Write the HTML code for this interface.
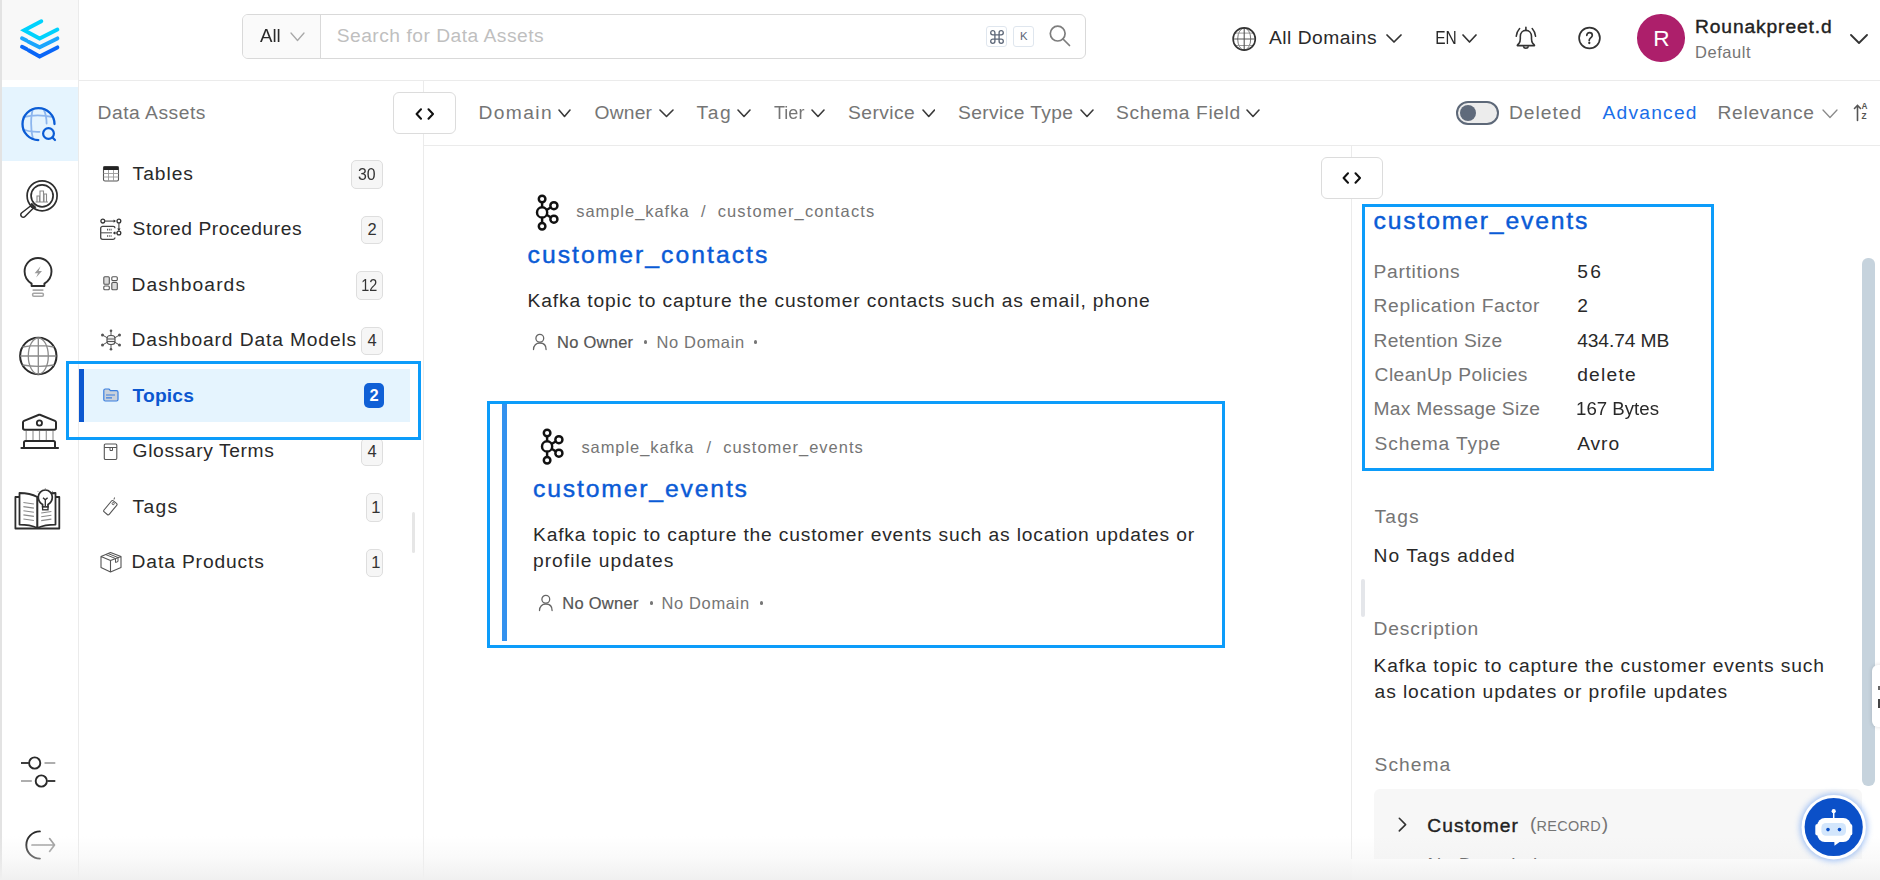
<!DOCTYPE html><html><head><meta charset="utf-8"><style>
html,body{margin:0;padding:0;}
body{width:1880px;height:880px;overflow:hidden;position:relative;background:#fff;font-family:"Liberation Sans",sans-serif;}
.t{position:absolute;white-space:nowrap;line-height:1;}
</style></head><body>

<div style="position:absolute;left:0px;top:0px;width:78px;height:880px;background:#fff;"></div>
<div style="position:absolute;left:0px;top:0px;width:1.5px;height:880px;background:#e3e3e3;"></div>
<div style="position:absolute;left:1.5px;top:0px;width:76.5px;height:80px;background:#f8f8f8;"></div>
<div style="position:absolute;left:1.5px;top:86.5px;width:76.5px;height:74px;background:#e5f4fe;"></div>
<div style="position:absolute;left:78px;top:0px;width:1px;height:880px;background:#ebebeb;"></div>
<div style="position:absolute;left:79px;top:80px;width:1801px;height:1px;background:#ebebeb;"></div>
<div style="position:absolute;left:423px;top:81px;width:1px;height:799px;background:#ebebeb;"></div>
<div style="position:absolute;left:424px;top:145px;width:1456px;height:1px;background:#ebebeb;"></div>
<div style="position:absolute;left:1351px;top:146px;width:1px;height:713px;background:#ebebeb;"></div>
<svg style="position:absolute;left:16px;top:15px;display:none" width="48" height="48" viewBox="0 0 48 48" fill="none">
<path d="M21 5 L6.5 12.8 L21 20.5 L35.5 12.8" stroke="#00cfff" stroke-width="3.2" fill="none" stroke-linejoin="miter"/>
</svg>
<svg style="position:absolute;left:0px;top:0px" width="78" height="78" viewBox="0 0 78 78">
<path d="M41.3 21.2 L24.2 30.2 L39.6 38.5 L57.4 29.6" stroke="#00d2fd" stroke-width="3.9" fill="none" stroke-linecap="round" stroke-miterlimit="4"/>
<path d="M22 38.3 L26.5 40.6 M28.5 41.8 L39.6 47.3 L57.4 38.4" stroke="#1ba6fd" stroke-width="3.9" fill="none" stroke-linecap="round"/>
<path d="M22 46.8 L26.5 49.1 M28.5 50.3 L39.6 56.5 L57.4 47.4" stroke="#0a66f7" stroke-width="3.9" fill="none" stroke-linecap="round"/>
</svg>
<div style="position:absolute;left:242px;top:14px;width:844px;height:44.5px;box-sizing:border-box;border:1px solid #d9d9d9;border-radius:6px;background:#fff;"></div>
<div style="position:absolute;left:243px;top:15px;width:77px;height:42.5px;background:#fafafa;border-radius:5px 0 0 5px;"></div>
<div style="position:absolute;left:320px;top:15px;width:1px;height:42.5px;background:#d9d9d9;"></div>
<svg style="position:absolute;left:290px;top:32px;" width="15" height="9.5" viewBox="0 0 15 9.5" fill="none"><path d="M1 1 L7.5 8.5 L14 1" stroke="#a8a8a8" stroke-width="1.3" stroke-linecap="round" stroke-linejoin="round"/></svg>
<div style="position:absolute;left:986px;top:26px;width:21px;height:21px;box-sizing:border-box;border:1px solid #dfe6ee;border-radius:3px;background:#fff;"></div>
<div style="position:absolute;left:1013px;top:26px;width:21px;height:21px;box-sizing:border-box;border:1px solid #dfe6ee;border-radius:3px;background:#fff;"></div>
<svg style="position:absolute;left:989.6px;top:29.6px" width="14" height="14" viewBox="2 2 20 20"><path d="M18 3a3 3 0 0 0-3 3v12a3 3 0 0 0 3 3 3 3 0 0 0 3-3 3 3 0 0 0-3-3H6a3 3 0 0 0-3 3 3 3 0 0 0 3 3 3 3 0 0 0 3-3V6a3 3 0 0 0-3-3 3 3 0 0 0-3 3 3 3 0 0 0 3 3h12a3 3 0 0 0 3-3 3 3 0 0 0-3-3z" stroke="#5d6778" stroke-width="1.9" fill="none"/></svg>
<svg style="position:absolute;left:1045px;top:22px;" width="30" height="30" viewBox="0 0 30 30" fill="none"><circle cx="12.7" cy="11.6" r="7.4" stroke="#7d7d7d" stroke-width="1.7"/><path d="M18 17 L24.5 23.5" stroke="#7d7d7d" stroke-width="1.7" stroke-linecap="round"/></svg>
<svg style="position:absolute;left:1230px;top:24.5px;" width="28" height="28" viewBox="0 0 28 28" fill="none"><ellipse cx="14.2" cy="14" rx="6.5" ry="11" stroke="#777" stroke-width="1"/>
<path d="M4.6 8.1 H23.8 M4.6 20.5 H23.8" stroke="#999" stroke-width="1"/>
<path d="M14.2 3 V25 M3 14 H25.4" stroke="#555" stroke-width="1.1"/>
<circle cx="14.2" cy="14" r="11.1" stroke="#333" stroke-width="1.6"/></svg>
<svg style="position:absolute;left:1386px;top:34px;" width="16" height="9" viewBox="0 0 16 9" fill="none"><path d="M1 1 L8.0 8 L15 1" stroke="#333" stroke-width="1.7" stroke-linecap="round" stroke-linejoin="round"/></svg>
<svg style="position:absolute;left:1462px;top:34px;" width="15" height="9" viewBox="0 0 15 9" fill="none"><path d="M1 1 L7.5 8 L14 1" stroke="#333" stroke-width="1.7" stroke-linecap="round" stroke-linejoin="round"/></svg>
<svg style="position:absolute;left:1512px;top:24px;" width="28" height="28" viewBox="0 0 28 28" fill="none"><path d="M13.9 3.4 V6.3" stroke="#333" stroke-width="1.6" stroke-linecap="round"/>
<path d="M5.3 21.6 C5.3 20.8 6.2 20.2 7 19.4 C8 18.3 8.3 16.8 8.3 14.8 V12.6 C8.3 8.9 10.8 6.4 13.9 6.4 C17 6.4 19.5 8.9 19.5 12.6 V14.8 C19.5 16.8 19.8 18.3 20.8 19.4 C21.6 20.2 22.5 20.8 22.5 21.6 Z" stroke="#333" stroke-width="1.6" stroke-linejoin="round"/>
<path d="M11.3 22.2 A2.7 2.7 0 0 0 16.5 22.2" stroke="#333" stroke-width="1.5" fill="none"/>
<path d="M7.6 4.6 C5.8 6.6 4.6 9.4 4.2 12.3 M20.2 4.6 C22 6.6 23.2 9.4 23.6 12.3" stroke="#333" stroke-width="1.5" stroke-linecap="round" fill="none"/></svg>
<svg style="position:absolute;left:1575px;top:24px;" width="28" height="28" viewBox="0 0 28 28" fill="none"><circle cx="14.5" cy="14" r="10.4" stroke="#333" stroke-width="1.7"/>
<path d="M11.8 11.3 C11.8 9.6 13 8.6 14.5 8.6 C16.1 8.6 17.3 9.7 17.3 11.2 C17.3 12.6 16.4 13.3 15.4 14.1 C14.6 14.8 14.2 15.4 14.2 16.6" stroke="#333" stroke-width="1.7" fill="none" stroke-linecap="round"/>
<circle cx="14.3" cy="19" r="1.15" fill="#333"/></svg>
<div style="position:absolute;left:1637px;top:14.2px;width:47.5px;height:47.5px;background:#ad1f6b;border-radius:50%;"></div>
<svg style="position:absolute;left:1850px;top:34px;" width="18" height="10" viewBox="0 0 18 10" fill="none"><path d="M1 1 L9.0 9 L17 1" stroke="#333" stroke-width="1.8" stroke-linecap="round" stroke-linejoin="round"/></svg>
<svg style="position:absolute;left:18px;top:103px;" width="42" height="42" viewBox="0 0 42 42" fill="none">
<path d="M15 6 C12.5 13 12.5 27 15 36 M25.5 6 C28 11 28.6 15.5 28.6 20.5 M5.5 14 C14 12 25 12 35 14 M5 26.5 C10 28.5 16 29 21.5 28.8" stroke="#8db6ee" stroke-width="1.8" fill="none" stroke-linecap="round"/>
<path d="M36.5 21 A16 16 0 1 0 20.3 37.1" stroke="#0b5cd5" stroke-width="2.3" stroke-linecap="round" fill="none"/>
<circle cx="30.5" cy="30.5" r="5.4" stroke="#0b5cd5" stroke-width="2.2" fill="none"/>
<path d="M34.5 34.5 L37 37" stroke="#0b5cd5" stroke-width="2.2" stroke-linecap="round"/>
</svg>
<svg style="position:absolute;left:18px;top:176px;" width="42" height="42" viewBox="0 0 42 42" fill="none">
<circle cx="24.1" cy="19.8" r="15" stroke="#2e2e2e" stroke-width="1.7"/>
<circle cx="24.1" cy="19.8" r="11" stroke="#2e2e2e" stroke-width="1.7"/>
<path d="M19 26 V20 H21.5 V26 M22 26 V15 H25.5 V26 M26 26 V18 H28.5 V26 M17.5 26 H30" stroke="#8a8a8a" stroke-width="1.1" fill="none"/>
<path d="M12.5 30 L15 32.5 L7 40.5 C6 41.5 4.5 41.5 3.5 40.5 C2.5 39.5 2.5 38 3.5 37 Z" stroke="#2e2e2e" stroke-width="1.5" fill="none" stroke-linejoin="round"/>
<path d="M13 27.5 L17.5 32" stroke="#2e2e2e" stroke-width="2.4"/>
</svg>
<svg style="position:absolute;left:18px;top:252px;" width="42" height="50" viewBox="0 0 42 50" fill="none">
<path d="M13.6 34 V31.6 C9.5 29 6.6 24.8 6.6 19.5 C6.6 12 12.5 6 20 6 C27.5 6 33.5 12 33.5 19.5 C33.5 24.8 30.5 29 26.4 31.6 V34 Z" stroke="#2e2e2e" stroke-width="1.9" stroke-linejoin="round"/>
<path d="M22.6 14.3 L16.6 21.2 H20 L18.2 25.4 L24 19 H20.6 Z" fill="#9a9a9a"/>
<path d="M14.6 38.1 H25.4" stroke="#a5a5a5" stroke-width="1.7"/>
<rect x="14.6" y="41.3" width="10.8" height="3" rx="1.2" stroke="#a5a5a5" stroke-width="1.5"/>
</svg>
<svg style="position:absolute;left:16px;top:334px;" width="44" height="44" viewBox="0 0 44 44" fill="none">
<circle cx="22.3" cy="22" r="18.2" stroke="#2a2a2a" stroke-width="2"/>
<ellipse cx="22.3" cy="22" rx="10" ry="18" stroke="#8a8a8a" stroke-width="1.3"/>
<path d="M22.3 4 V40 M4.2 22 H40.4 M6.5 13 C16 11.5 29 11.5 38 13 M6.5 31 C16 32.5 29 32.5 38 31" stroke="#8a8a8a" stroke-width="1.3" fill="none"/>
</svg>
<svg style="position:absolute;left:16px;top:408px;" width="46" height="46" viewBox="0 0 46 46" fill="none">
<path d="M7 14.5 C7 13.8 7.3 13.2 8 12.9 L23 6.8 C23.3 6.7 23.6 6.7 23.9 6.8 L39 12.9 C39.7 13.2 40 13.8 40 14.5 V20 C40 21 39.3 21.8 38.3 21.8 H8.7 C7.7 21.8 7 21 7 20 Z" stroke="#2a2a2a" stroke-width="2"/>
<circle cx="23.4" cy="15" r="2.6" stroke="#2a2a2a" stroke-width="1.8"/>
<path d="M10.2 23 V33 M17 23 V33 M23.5 23 V33 M30.3 23 V33 M37 23 V33" stroke="#9a9a9a" stroke-width="1.2"/>
<path d="M8 40 V34.6 C8 33.8 8.7 33 9.5 33 H37.5 C38.3 33 39 33.8 39 34.6 V40" stroke="#2a2a2a" stroke-width="2"/>
<path d="M5.5 40 H42" stroke="#2a2a2a" stroke-width="2.2" stroke-linecap="round"/>
</svg>
<svg style="position:absolute;left:14px;top:486px;" width="48" height="48" viewBox="0 0 48 48" fill="none">
<path d="M5.5 11 H1.4 V42.5 H45.3 V11 H41.5" stroke="#2e2e2e" stroke-width="1.8" fill="none" stroke-linejoin="round"/>
<path d="M23.4 11 C19 8.6 12 7 5.5 7 V38.6 C12 38.6 19 40 23.4 42 Z" stroke="#2e2e2e" stroke-width="1.8" fill="#fff" stroke-linejoin="round"/>
<path d="M23.4 11 C27.8 8.6 34.8 7 41.5 7 V38.6 C34.8 38.6 27.8 40 23.4 42 Z" stroke="#2e2e2e" stroke-width="1.8" fill="#fff" stroke-linejoin="round"/>
<path d="M9.4 16.5 L19.9 18 M9.4 20.6 L19.9 22.1 M9.4 24.8 L19.9 26.3 M9.4 28.9 L19.9 30.4 M9.4 33 L19.9 34.5 M27.2 27 L37.4 25.5 M27.2 30.7 L37.4 29.2 M27.2 34.6 L37.4 33.1" stroke="#8a8a8a" stroke-width="1.1"/>
<path d="M28.6 21 V18.4 C26.1 17 24.3 14.3 24.3 11 C24.3 7.1 27.4 4 31.3 4 C35.2 4 38.3 7.1 38.3 11 C38.3 14.3 36.5 17 34 18.4 V21 Z" stroke="#2e2e2e" stroke-width="1.7" fill="#fff" stroke-linejoin="round"/>
<path d="M31.3 20 V13.6 M29 11.7 L31.3 13.8 L33.6 11.7" stroke="#2e2e2e" stroke-width="1.3" fill="none"/>
<rect x="28.6" y="21" width="5.4" height="2.8" stroke="#2e2e2e" stroke-width="1.3" fill="#fff"/>
<circle cx="31.3" cy="2.6" r="0.6" fill="#999"/><circle cx="24" cy="5.4" r="0.6" fill="#999"/><circle cx="38.4" cy="5.4" r="0.6" fill="#999"/>
</svg>
<svg style="position:absolute;left:16px;top:752px;" width="44" height="40" viewBox="0 0 44 40" fill="none">
<path d="M5 11 H12.8" stroke="#2a2a2a" stroke-width="1.8"/>
<path d="M28.5 11 H39.3" stroke="#a0a0a0" stroke-width="1.7"/>
<path d="M5 29 H15.8" stroke="#a0a0a0" stroke-width="1.7"/>
<path d="M31.5 29 H39.3" stroke="#2a2a2a" stroke-width="1.8"/>
<circle cx="18.7" cy="11" r="5.6" stroke="#2a2a2a" stroke-width="1.9"/>
<circle cx="25.3" cy="29" r="5.6" stroke="#2a2a2a" stroke-width="1.9"/>
</svg>
<svg style="position:absolute;left:16px;top:826px;" width="44" height="40" viewBox="0 0 44 40" fill="none">
<path d="M23.9 5.4 A13.6 13.6 0 0 0 23.9 32.6" stroke="#2a2a2a" stroke-width="1.9" fill="none" stroke-linecap="round"/>
<path d="M16 19 H38.3 M33.6 12.6 L38.5 19 L33.6 25.4" stroke="#9a9a9a" stroke-width="1.7" fill="none" stroke-linecap="round" stroke-linejoin="round"/>
</svg>
<div style="position:absolute;left:393px;top:92px;width:63px;height:42px;box-sizing:border-box;border:1px solid #dcdcdc;border-radius:6px;background:#fff;"></div>
<svg style="position:absolute;left:414.5px;top:107.5px;" width="20" height="12" viewBox="0 0 20 12" fill="none"><path d="M6 1.2 L1.6 6 L6 10.8 M13.5 1.2 L18 6 L13.5 10.8" stroke="#111" stroke-width="2" fill="none" stroke-linecap="round" stroke-linejoin="round"/></svg>
<div style="position:absolute;left:79px;top:369px;width:331px;height:53px;background:#e5f4fe;"></div>
<div style="position:absolute;left:79px;top:369px;width:4.5px;height:53px;background:#0b57d0;"></div>
<div style="position:absolute;left:351.2px;top:160px;width:31.8px;height:28.5px;box-sizing:border-box;border:1px solid #dedede;border-radius:5px;background:#f6f6f6;"></div>
<div style="position:absolute;left:361.2px;top:215.5px;width:21.8px;height:28.5px;box-sizing:border-box;border:1px solid #dedede;border-radius:5px;background:#f6f6f6;"></div>
<div style="position:absolute;left:356.2px;top:271px;width:26.8px;height:28.5px;box-sizing:border-box;border:1px solid #dedede;border-radius:5px;background:#f6f6f6;"></div>
<div style="position:absolute;left:361.2px;top:326.5px;width:21.8px;height:28.5px;box-sizing:border-box;border:1px solid #dedede;border-radius:5px;background:#f6f6f6;"></div>
<div style="position:absolute;left:364px;top:382.6px;width:19.5px;height:25.4px;background:#1060d6;border-radius:5px;"></div>
<div style="position:absolute;left:361.2px;top:437.5px;width:21.8px;height:28.5px;box-sizing:border-box;border:1px solid #dedede;border-radius:5px;background:#f6f6f6;"></div>
<div style="position:absolute;left:365.5px;top:493px;width:17.5px;height:28.5px;box-sizing:border-box;border:1px solid #dedede;border-radius:5px;background:#f6f6f6;"></div>
<div style="position:absolute;left:365.5px;top:548.5px;width:17.5px;height:28.5px;box-sizing:border-box;border:1px solid #dedede;border-radius:5px;background:#f6f6f6;"></div>
<svg style="position:absolute;left:101px;top:164px;" width="20" height="20" viewBox="0 0 20 20" fill="none"><rect x="2.5" y="2.5" width="15" height="14.5" rx="1.5" stroke="#555" stroke-width="1.1"/><rect x="2.5" y="2.5" width="15" height="3.5" fill="#222"/>
<path d="M2.5 9.5 H17.5 M2.5 13 H17.5 M7.5 6 V17 M12.5 6 V17" stroke="#999" stroke-width="0.9"/></svg>
<svg style="position:absolute;left:99px;top:218px;" width="24" height="24" viewBox="0 0 24 24" fill="none"><circle cx="3.8" cy="3.1" r="1.9" stroke="#333" stroke-width="1.3"/><path d="M5.7 3.1 H16" stroke="#555" stroke-width="1.2"/><path d="M14.6 1.4 L17 3.1 L14.6 4.8 Z" fill="#333"/>
<circle cx="19.9" cy="3.1" r="1.9" stroke="#333" stroke-width="1.3"/><path d="M19.9 5 V12" stroke="#555" stroke-width="1.2"/><path d="M18.2 10.6 L19.9 13 L21.6 10.6 Z" fill="#333"/>
<circle cx="19.9" cy="15" r="1.9" stroke="#333" stroke-width="1.3"/><path d="M18 15 H15" stroke="#555" stroke-width="1.2"/><path d="M16.2 13.3 L13.8 15 L16.2 16.7 Z" fill="#333"/>
<path d="M16 10.2 C16 9.2 15.2 8.4 14.2 8.4 H3.6 C2.6 8.4 1.7 9.2 1.7 10.2 V19.5 C1.7 20.5 2.6 21.3 3.6 21.3 H14.2 C15.2 21.3 16 20.5 16 19.5" stroke="#444" stroke-width="1.3" fill="none"/>
<path d="M1.7 14.8 H13" stroke="#555" stroke-width="1.1"/><path d="M8 11.6 H13 M8 18 H13" stroke="#555" stroke-width="1.6" stroke-dasharray="1 0.8"/></svg>
<svg style="position:absolute;left:102px;top:275px;" width="18" height="18" viewBox="0 0 18 18" fill="none"><rect x="1.8" y="1.8" width="5.5" height="7.5" rx="1" stroke="#555" stroke-width="1.1" fill="#ddd"/><rect x="9.8" y="1.8" width="5.5" height="3.8" rx="1" stroke="#555" stroke-width="1.1"/>
<rect x="1.8" y="11" width="5.5" height="3.8" rx="1" stroke="#555" stroke-width="1.1"/><rect x="9.8" y="7.5" width="5.5" height="7.3" rx="1" stroke="#555" stroke-width="1.1" fill="#ddd"/></svg>
<svg style="position:absolute;left:99px;top:328px;" width="24" height="24" viewBox="0 0 24 24" fill="none"><path d="M12 2.5 V21.5 M3.5 7 L20.5 17 M3.5 17 L20.5 7" stroke="#555" stroke-width="1"/>
<circle cx="12" cy="2.8" r="1.3" fill="#555"/><circle cx="12" cy="21.2" r="1.3" fill="#555"/><circle cx="3.5" cy="7" r="1.5" fill="#555"/><circle cx="20.5" cy="7" r="1.5" fill="#555"/><circle cx="3.5" cy="17" r="1.5" fill="#555"/><circle cx="20.5" cy="17" r="1.5" fill="#555"/>
<rect x="8" y="7.5" width="8" height="9" rx="3" stroke="#555" stroke-width="1.2" fill="#eee"/><path d="M8 11 H16 M8 13.5 H16" stroke="#555" stroke-width="1"/></svg>
<svg style="position:absolute;left:102px;top:387px;" width="18" height="16" viewBox="0 0 18 16" fill="none"><path d="M1.8 3.5 C1.8 2.6 2.5 2 3.3 2 H7 L8.5 3.7 H14.5 C15.3 3.7 16 4.4 16 5.2 V12.5 C16 13.3 15.3 14 14.5 14 H3.3 C2.5 14 1.8 13.3 1.8 12.5 Z" stroke="#3b7fe0" stroke-width="1.2" fill="#c9d1db"/>
<path d="M4 8 H13 M4 10.8 H10" stroke="#3b7fe0" stroke-width="1.2"/></svg>
<svg style="position:absolute;left:102px;top:441.5px;" width="18" height="20" viewBox="0 0 18 20" fill="none"><rect x="2.3" y="2" width="12.5" height="15.5" rx="1.2" stroke="#555" stroke-width="1.1"/><path d="M2.3 5.5 H14.8 M8 5.5 V8.5 H10.5 V5.5" stroke="#555" stroke-width="1"/></svg>
<svg style="position:absolute;left:100px;top:496px;" width="22" height="22" viewBox="0 0 22 22" fill="none"><path d="M4 14 L11.5 5 C12 4.4 12.8 4.3 13.4 4.8 L16.5 7.4 C17.1 7.9 17.2 8.7 16.7 9.3 L9.2 18.3 C8.7 18.9 7.9 19 7.3 18.5 L4.2 15.9 C3.6 15.4 3.5 14.6 4 14 Z" stroke="#555" stroke-width="1.1"/><circle cx="13.2" cy="7.6" r="1.1" stroke="#555" stroke-width="0.9"/><path d="M14 3.5 L14.5 1.5" stroke="#555" stroke-width="1"/></svg>
<svg style="position:absolute;left:98px;top:550px;" width="26" height="24" viewBox="0 0 26 24" fill="none"><path d="M3 6.5 L12.5 2.5 L23 6.5 V17.5 L12.5 22 L3 17.5 Z M3 6.5 L12.5 10.5 L23 6.5 M12.5 10.5 V22" stroke="#555" stroke-width="1.1" fill="none" stroke-linejoin="round"/>
<path d="M7.5 4.5 L17.5 8.5 V12.5 L20 11.5 V7.5 L10 3.5" stroke="#555" stroke-width="1" fill="none"/></svg>
<div style="position:absolute;left:411.5px;top:512px;width:3.5px;height:41px;background:#e6e6e6;border-radius:2px;"></div>
<div style="position:absolute;left:66px;top:361px;width:355px;height:79px;box-sizing:border-box;border:3px solid #0c9cfa;"></div>
<svg style="position:absolute;left:558px;top:109px;" width="13" height="8.5" viewBox="0 0 13 8.5" fill="none"><path d="M1 1 L6.5 7.5 L12 1" stroke="#3a3a3a" stroke-width="1.6" stroke-linecap="round" stroke-linejoin="round"/></svg>
<svg style="position:absolute;left:659px;top:109px;" width="15" height="8.5" viewBox="0 0 15 8.5" fill="none"><path d="M1 1 L7.5 7.5 L14 1" stroke="#3a3a3a" stroke-width="1.6" stroke-linecap="round" stroke-linejoin="round"/></svg>
<svg style="position:absolute;left:737px;top:109px;" width="14" height="8.5" viewBox="0 0 14 8.5" fill="none"><path d="M1 1 L7.0 7.5 L13 1" stroke="#3a3a3a" stroke-width="1.6" stroke-linecap="round" stroke-linejoin="round"/></svg>
<svg style="position:absolute;left:811px;top:109px;" width="14" height="8.5" viewBox="0 0 14 8.5" fill="none"><path d="M1 1 L7.0 7.5 L13 1" stroke="#3a3a3a" stroke-width="1.6" stroke-linecap="round" stroke-linejoin="round"/></svg>
<svg style="position:absolute;left:921.5px;top:109px;" width="13.5" height="8.5" viewBox="0 0 13.5 8.5" fill="none"><path d="M1 1 L6.75 7.5 L12.5 1" stroke="#3a3a3a" stroke-width="1.6" stroke-linecap="round" stroke-linejoin="round"/></svg>
<svg style="position:absolute;left:1080px;top:109px;" width="14" height="8.5" viewBox="0 0 14 8.5" fill="none"><path d="M1 1 L7.0 7.5 L13 1" stroke="#3a3a3a" stroke-width="1.6" stroke-linecap="round" stroke-linejoin="round"/></svg>
<svg style="position:absolute;left:1246px;top:109px;" width="14" height="8.5" viewBox="0 0 14 8.5" fill="none"><path d="M1 1 L7.0 7.5 L13 1" stroke="#3a3a3a" stroke-width="1.6" stroke-linecap="round" stroke-linejoin="round"/></svg>
<div style="position:absolute;left:1456px;top:100.5px;width:43px;height:24.5px;box-sizing:border-box;border:2px solid #5d6878;border-radius:13px;background:#ececec;"></div>
<div style="position:absolute;left:1460px;top:104.8px;width:16px;height:16px;background:#5f6a7b;border-radius:50%;"></div>
<svg style="position:absolute;left:1822px;top:109px;" width="16" height="9.5" viewBox="0 0 16 9.5" fill="none"><path d="M1 1 L8.0 8.5 L15 1" stroke="#8a8a8a" stroke-width="1.3" stroke-linecap="round" stroke-linejoin="round"/></svg>
<svg style="position:absolute;left:1851px;top:102px;" width="20" height="22" viewBox="0 0 20 22" fill="none"><path d="M6.5 3.5 V18.5 M3.5 6.5 L6.5 3.3 L9.5 6.5" stroke="#555" stroke-width="1.6" fill="none" stroke-linecap="round"/></svg>
<svg style="position:absolute;left:534.5px;top:191.5px;" width="26" height="40" viewBox="0 0 26 40" fill="none"><g stroke="#111" stroke-width="2.45" fill="none">
<circle cx="7.1" cy="7" r="3.3"/><circle cx="7.1" cy="20.4" r="5.1"/><circle cx="7.1" cy="34.2" r="3.3"/>
<circle cx="18.9" cy="13.7" r="3.55"/><circle cx="18.9" cy="27.2" r="3.55"/>
<path d="M7.1 10.3 V15.3 M7.1 25.5 V30.9 M11.6 18 L15.6 15.5 M11.6 22.8 L15.6 25.3"/></g></svg>
<svg style="position:absolute;left:532px;top:333px;" width="16" height="18" viewBox="0 0 16 18" fill="none"><circle cx="7.8" cy="5.2" r="3.9" stroke="#666" stroke-width="1.3"/><path d="M1.5 16.5 C1.5 12.3 4.2 10 7.8 10 C11.4 10 14.1 12.3 14.1 16.5" stroke="#666" stroke-width="1.3" fill="none" stroke-linecap="round"/></svg>
<div style="position:absolute;left:644.1px;top:340.4px;width:3.2px;height:3.2px;background:#777;border-radius:50%;"></div>
<div style="position:absolute;left:753.9px;top:340.4px;width:3.2px;height:3.2px;background:#777;border-radius:50%;"></div>
<div style="position:absolute;left:502px;top:403.5px;width:5px;height:237.5px;background:#3391ee;"></div>
<svg style="position:absolute;left:539.5px;top:426px;" width="26" height="40" viewBox="0 0 26 40" fill="none"><g stroke="#111" stroke-width="2.45" fill="none">
<circle cx="7.1" cy="7" r="3.3"/><circle cx="7.1" cy="20.4" r="5.1"/><circle cx="7.1" cy="34.2" r="3.3"/>
<circle cx="18.9" cy="13.7" r="3.55"/><circle cx="18.9" cy="27.2" r="3.55"/>
<path d="M7.1 10.3 V15.3 M7.1 25.5 V30.9 M11.6 18 L15.6 15.5 M11.6 22.8 L15.6 25.3"/></g></svg>
<svg style="position:absolute;left:537.5px;top:594px;" width="16" height="18" viewBox="0 0 16 18" fill="none"><circle cx="7.8" cy="5.2" r="3.9" stroke="#666" stroke-width="1.3"/><path d="M1.5 16.5 C1.5 12.3 4.2 10 7.8 10 C11.4 10 14.1 12.3 14.1 16.5" stroke="#666" stroke-width="1.3" fill="none" stroke-linecap="round"/></svg>
<div style="position:absolute;left:649.5px;top:601.4px;width:3.2px;height:3.2px;background:#777;border-radius:50%;"></div>
<div style="position:absolute;left:759.8px;top:601.4px;width:3.2px;height:3.2px;background:#777;border-radius:50%;"></div>
<div style="position:absolute;left:487px;top:401px;width:738px;height:247px;box-sizing:border-box;border:3px solid #0c9cfa;"></div>
<div style="position:absolute;left:1321px;top:157px;width:62px;height:42px;box-sizing:border-box;border:1px solid #dcdcdc;border-radius:6px;background:#fff;"></div>
<svg style="position:absolute;left:1342px;top:172px;" width="20" height="12" viewBox="0 0 20 12" fill="none"><path d="M6 1.2 L1.6 6 L6 10.8 M13.5 1.2 L18 6 L13.5 10.8" stroke="#111" stroke-width="2" fill="none" stroke-linecap="round" stroke-linejoin="round"/></svg>
<div style="position:absolute;left:1362px;top:204px;width:352px;height:267px;box-sizing:border-box;border:3px solid #0c9cfa;"></div>
<div style="position:absolute;left:1361.3px;top:578.8px;width:4px;height:38px;background:#e4e6ea;border-radius:2px;"></div>
<div style="position:absolute;left:1374px;top:789px;width:488px;height:70px;background:#f7f7f7;border-radius:6px 6px 0 0;"></div>
<svg style="position:absolute;left:1394px;top:813px;" width="18" height="22" viewBox="0 0 18 22" fill="none"><path d="M5.3 5.3 L11.6 11.6 L5.3 17.9" stroke="#333" stroke-width="1.6" fill="none" stroke-linecap="round" stroke-linejoin="round"/></svg>
<div style="position:absolute;left:1374px;top:840px;width:488px;height:19px;overflow:hidden;"><div class="t" style="left:53.5px;top:15px;font-size:19.23px;color:#262626;letter-spacing:0.46px">No Description</div></div>
<div style="position:absolute;left:1862px;top:257.5px;width:12.5px;height:528px;background:#c6d3dd;border-radius:6px;"></div>
<div style="position:absolute;left:1872px;top:665px;width:12px;height:62px;background:#fff;border-radius:6px 0 0 6px;box-shadow:0 0 4px rgba(0,0,0,0.15);"></div>
<div style="position:absolute;left:1878px;top:686px;width:2px;height:4px;background:#666;"></div>
<div style="position:absolute;left:1878px;top:699px;width:2px;height:9px;background:#444;"></div>
<div class="t" style="left:260.00px;top:25.92px;font-size:19.23px;font-weight:400;color:#292929;letter-spacing:0.000px;transform:scaleX(0.9707);transform-origin:0.00px 0;">All</div>
<div class="t" style="left:336.70px;top:26.12px;font-size:19.23px;font-weight:400;color:#bfbfbf;letter-spacing:0.495px;">Search for Data Assets</div>
<div class="t" style="left:1020.00px;top:30.91px;font-size:11.33px;font-weight:400;color:#5d6778;letter-spacing:0.000px;">K</div>
<div class="t" style="left:1269.00px;top:28.02px;font-size:19.23px;font-weight:400;color:#292929;letter-spacing:0.508px;">All Domains</div>
<div class="t" style="left:1435.00px;top:28.02px;font-size:19.23px;font-weight:400;color:#292929;letter-spacing:0.000px;transform:scaleX(0.8058);transform-origin:1.00px 0;">EN</div>
<div class="t" style="left:1653.30px;top:27.22px;font-size:22.66px;font-weight:400;color:#fff;letter-spacing:0.000px;">R</div>
<div class="t" style="left:1695.00px;top:17.42px;font-size:19.23px;font-weight:400;color:#222;letter-spacing:0.884px;-webkit-text-stroke:0.4px currentColor;">Rounakpreet.d</div>
<div class="t" style="left:1695.00px;top:44.05px;font-size:16.48px;font-weight:400;color:#757575;letter-spacing:0.566px;">Default</div>
<div class="t" style="left:97.60px;top:102.72px;font-size:19.23px;font-weight:400;color:#757575;letter-spacing:0.530px;">Data Assets</div>
<div class="t" style="left:132.60px;top:163.72px;font-size:19.23px;font-weight:400;color:#292929;letter-spacing:0.951px;">Tables</div>
<div class="t" style="left:358.35px;top:165.55px;font-size:16.48px;font-weight:400;color:#333;letter-spacing:0.000px;transform:scaleX(0.9637);transform-origin:0.00px 0;">30</div>
<div class="t" style="left:132.60px;top:219.22px;font-size:19.23px;font-weight:400;color:#292929;letter-spacing:0.548px;">Stored Procedures</div>
<div class="t" style="left:367.60px;top:221.05px;font-size:16.48px;font-weight:400;color:#333;letter-spacing:0.000px;">2</div>
<div class="t" style="left:131.60px;top:274.72px;font-size:19.23px;font-weight:400;color:#292929;letter-spacing:1.087px;">Dashboards</div>
<div class="t" style="left:361.10px;top:276.55px;font-size:16.48px;font-weight:400;color:#333;letter-spacing:0.000px;transform:scaleX(0.8742);transform-origin:1.00px 0;">12</div>
<div class="t" style="left:131.60px;top:330.22px;font-size:19.23px;font-weight:400;color:#292929;letter-spacing:0.868px;">Dashboard Data Models</div>
<div class="t" style="left:367.60px;top:332.05px;font-size:16.48px;font-weight:400;color:#333;letter-spacing:0.000px;">4</div>
<div class="t" style="left:132.60px;top:385.72px;font-size:19.23px;font-weight:700;color:#0b57d0;letter-spacing:0.156px;">Topics</div>
<div class="t" style="left:369.50px;top:386.55px;font-size:16.48px;font-weight:700;color:#fff;letter-spacing:0.000px;">2</div>
<div class="t" style="left:132.60px;top:441.22px;font-size:19.23px;font-weight:400;color:#292929;letter-spacing:0.625px;">Glossary Terms</div>
<div class="t" style="left:367.60px;top:443.05px;font-size:16.48px;font-weight:400;color:#333;letter-spacing:0.000px;">4</div>
<div class="t" style="left:132.60px;top:496.72px;font-size:19.23px;font-weight:400;color:#292929;letter-spacing:1.338px;">Tags</div>
<div class="t" style="left:371.25px;top:498.55px;font-size:16.48px;font-weight:400;color:#333;letter-spacing:0.000px;">1</div>
<div class="t" style="left:131.60px;top:552.22px;font-size:19.23px;font-weight:400;color:#292929;letter-spacing:0.878px;">Data Products</div>
<div class="t" style="left:371.25px;top:554.05px;font-size:16.48px;font-weight:400;color:#333;letter-spacing:0.000px;">1</div>
<div class="t" style="left:478.60px;top:102.82px;font-size:19.23px;font-weight:400;color:#757575;letter-spacing:1.353px;">Domain</div>
<div class="t" style="left:594.50px;top:102.82px;font-size:19.23px;font-weight:400;color:#757575;letter-spacing:0.224px;">Owner</div>
<div class="t" style="left:696.60px;top:102.82px;font-size:19.23px;font-weight:400;color:#757575;letter-spacing:1.552px;">Tag</div>
<div class="t" style="left:774.00px;top:102.82px;font-size:19.23px;font-weight:400;color:#757575;letter-spacing:0.000px;transform:scaleX(0.9398);transform-origin:0.00px 0;">Tier</div>
<div class="t" style="left:848.00px;top:102.82px;font-size:19.23px;font-weight:400;color:#757575;letter-spacing:0.434px;">Service</div>
<div class="t" style="left:958.00px;top:102.82px;font-size:19.23px;font-weight:400;color:#757575;letter-spacing:0.382px;">Service Type</div>
<div class="t" style="left:1116.00px;top:102.82px;font-size:19.23px;font-weight:400;color:#757575;letter-spacing:0.608px;">Schema Field</div>
<div class="t" style="left:1509.00px;top:102.72px;font-size:19.23px;font-weight:400;color:#757575;letter-spacing:0.974px;">Deleted</div>
<div class="t" style="left:1602.60px;top:102.72px;font-size:19.23px;font-weight:400;color:#1a6ee8;letter-spacing:1.201px;">Advanced</div>
<div class="t" style="left:1717.50px;top:102.72px;font-size:19.23px;font-weight:400;color:#757575;letter-spacing:0.710px;">Relevance</div>
<div class="t" style="left:1861.50px;top:103.03px;font-size:8.24px;font-weight:700;color:#555;letter-spacing:0.000px;">A</div>
<div class="t" style="left:1861.50px;top:112.53px;font-size:8.24px;font-weight:700;color:#555;letter-spacing:0.000px;">Z</div>
<div class="t" style="left:576.20px;top:203.35px;font-size:16.48px;font-weight:400;color:#757575;letter-spacing:0.977px;">sample_kafka</div>
<div class="t" style="left:701.00px;top:203.35px;font-size:16.48px;font-weight:400;color:#757575;letter-spacing:0.000px;">/</div>
<div class="t" style="left:717.70px;top:203.35px;font-size:16.48px;font-weight:400;color:#757575;letter-spacing:1.145px;">customer_contacts</div>
<div class="t" style="left:527.50px;top:242.68px;font-size:24.72px;font-weight:400;color:#0a5bd6;letter-spacing:2.025px;-webkit-text-stroke:0.45px currentColor;">customer_contacts</div>
<div class="t" style="left:527.50px;top:291.02px;font-size:19.23px;font-weight:400;color:#292929;letter-spacing:0.876px;">Kafka topic to capture the customer contacts such as email, phone</div>
<div class="t" style="left:557.00px;top:333.75px;font-size:16.48px;font-weight:400;color:#555;letter-spacing:0.279px;-webkit-text-stroke:0.2px currentColor;">No Owner</div>
<div class="t" style="left:656.50px;top:333.75px;font-size:16.48px;font-weight:400;color:#757575;letter-spacing:0.660px;">No Domain</div>
<div class="t" style="left:581.40px;top:438.55px;font-size:16.48px;font-weight:400;color:#757575;letter-spacing:0.950px;">sample_kafka</div>
<div class="t" style="left:706.50px;top:438.55px;font-size:16.48px;font-weight:400;color:#757575;letter-spacing:0.000px;">/</div>
<div class="t" style="left:723.20px;top:438.55px;font-size:16.48px;font-weight:400;color:#757575;letter-spacing:1.009px;">customer_events</div>
<div class="t" style="left:533.00px;top:477.28px;font-size:24.72px;font-weight:400;color:#0a5bd6;letter-spacing:1.838px;-webkit-text-stroke:0.45px currentColor;">customer_events</div>
<div class="t" style="left:533.00px;top:525.32px;font-size:19.23px;font-weight:400;color:#292929;letter-spacing:0.833px;">Kafka topic to capture the customer events such as location updates or</div>
<div class="t" style="left:533.00px;top:551.42px;font-size:19.23px;font-weight:400;color:#292929;letter-spacing:1.017px;">profile updates</div>
<div class="t" style="left:562.20px;top:594.65px;font-size:16.48px;font-weight:400;color:#555;letter-spacing:0.307px;-webkit-text-stroke:0.2px currentColor;">No Owner</div>
<div class="t" style="left:661.50px;top:594.65px;font-size:16.48px;font-weight:400;color:#757575;letter-spacing:0.648px;">No Domain</div>
<div class="t" style="left:1373.60px;top:208.78px;font-size:24.72px;font-weight:400;color:#0a5bd6;letter-spacing:1.824px;-webkit-text-stroke:0.45px currentColor;">customer_events</div>
<div class="t" style="left:1373.60px;top:262.02px;font-size:19.23px;font-weight:400;color:#757575;letter-spacing:0.655px;">Partitions</div>
<div class="t" style="left:1577.20px;top:262.02px;font-size:19.23px;font-weight:400;color:#292929;letter-spacing:2.411px;">56</div>
<div class="t" style="left:1373.60px;top:296.32px;font-size:19.23px;font-weight:400;color:#757575;letter-spacing:0.642px;">Replication Factor</div>
<div class="t" style="left:1577.20px;top:296.32px;font-size:19.23px;font-weight:400;color:#292929;letter-spacing:0.000px;">2</div>
<div class="t" style="left:1373.60px;top:330.72px;font-size:19.23px;font-weight:400;color:#757575;letter-spacing:0.269px;">Retention Size</div>
<div class="t" style="left:1577.20px;top:330.72px;font-size:19.23px;font-weight:400;color:#292929;letter-spacing:-0.104px;">434.74 MB</div>
<div class="t" style="left:1374.60px;top:364.72px;font-size:19.23px;font-weight:400;color:#757575;letter-spacing:0.431px;">CleanUp Policies</div>
<div class="t" style="left:1577.20px;top:364.72px;font-size:19.23px;font-weight:400;color:#292929;letter-spacing:1.225px;">delete</div>
<div class="t" style="left:1373.60px;top:399.42px;font-size:19.23px;font-weight:400;color:#757575;letter-spacing:0.269px;">Max Message Size</div>
<div class="t" style="left:1576.20px;top:399.42px;font-size:19.23px;font-weight:400;color:#292929;letter-spacing:0.000px;transform:scaleX(0.9706);transform-origin:1.00px 0;">167 Bytes</div>
<div class="t" style="left:1374.60px;top:434.02px;font-size:19.23px;font-weight:400;color:#757575;letter-spacing:0.838px;">Schema Type</div>
<div class="t" style="left:1577.20px;top:434.02px;font-size:19.23px;font-weight:400;color:#292929;letter-spacing:0.906px;">Avro</div>
<div class="t" style="left:1374.60px;top:506.72px;font-size:19.23px;font-weight:400;color:#757575;letter-spacing:1.138px;">Tags</div>
<div class="t" style="left:1373.60px;top:546.42px;font-size:19.23px;font-weight:400;color:#292929;letter-spacing:1.009px;">No Tags added</div>
<div class="t" style="left:1373.60px;top:619.22px;font-size:19.23px;font-weight:400;color:#757575;letter-spacing:0.856px;">Description</div>
<div class="t" style="left:1373.60px;top:656.22px;font-size:19.23px;font-weight:400;color:#292929;letter-spacing:0.873px;">Kafka topic to capture the customer events such</div>
<div class="t" style="left:1374.60px;top:682.22px;font-size:19.23px;font-weight:400;color:#292929;letter-spacing:0.896px;">as location updates or profile updates</div>
<div class="t" style="left:1374.60px;top:754.72px;font-size:19.23px;font-weight:400;color:#757575;letter-spacing:1.037px;">Schema</div>
<div class="t" style="left:1427.30px;top:816.02px;font-size:19.23px;font-weight:400;color:#222;letter-spacing:1.057px;-webkit-text-stroke:0.38px currentColor;">Customer</div>
<div class="t" style="left:1530.00px;top:814.22px;font-size:19.23px;font-weight:400;color:#757575;letter-spacing:0.000px;">(</div>
<div class="t" style="left:1536.60px;top:818.59px;font-size:14.42px;font-weight:400;color:#757575;letter-spacing:0.315px;">RECORD</div>
<div class="t" style="left:1601.80px;top:814.22px;font-size:19.23px;font-weight:400;color:#757575;letter-spacing:0.000px;">)</div>
<div style="position:absolute;left:0;top:836px;width:1880px;height:44px;background:linear-gradient(to bottom,rgba(240,240,240,0) 0%,rgba(240,240,240,0.35) 50%,rgba(240,240,240,0.75) 80%,#f0f0f0 100%);"></div>
<div style="position:absolute;left:1352px;top:859px;width:528px;height:21px;background:linear-gradient(to bottom,#fafafa,#f1f1f1);"></div>
<svg style="position:absolute;left:1790px;top:783px" width="88" height="88" viewBox="-6 -6 88 88">
<defs><filter id="gl" x="-40%" y="-40%" width="180%" height="180%"><feGaussianBlur stdDeviation="3"/></filter></defs>
<circle cx="37.7" cy="38.2" r="33.5" fill="#4d8cf0" opacity="0.55" filter="url(#gl)"/>
<circle cx="37.7" cy="38.2" r="32.2" fill="#fff"/>
<circle cx="37.7" cy="38" r="29.1" fill="#0b50c8"/>
<path d="M37.7 22.5 V29.5" stroke="#fff" stroke-width="1.5"/><circle cx="37.7" cy="22.2" r="2.1" fill="#fff"/>
<rect x="21.3" y="29" width="33.5" height="23.9" rx="7.5" fill="#fff"/>
<rect x="19.3" y="35" width="4" height="11.5" rx="2" fill="#fff"/><rect x="52.3" y="35" width="4" height="11.5" rx="2" fill="#fff"/>
<path d="M38.3 52 L38.5 56.8 L45 52 Z" fill="#fff"/>
<rect x="25.4" y="34" width="24.6" height="12.7" rx="4.5" fill="#d3e6fc"/>
<circle cx="32" cy="40.6" r="1.8" fill="#0b50c8"/><circle cx="43.5" cy="40.6" r="1.8" fill="#0b50c8"/>
</svg>
</body></html>
